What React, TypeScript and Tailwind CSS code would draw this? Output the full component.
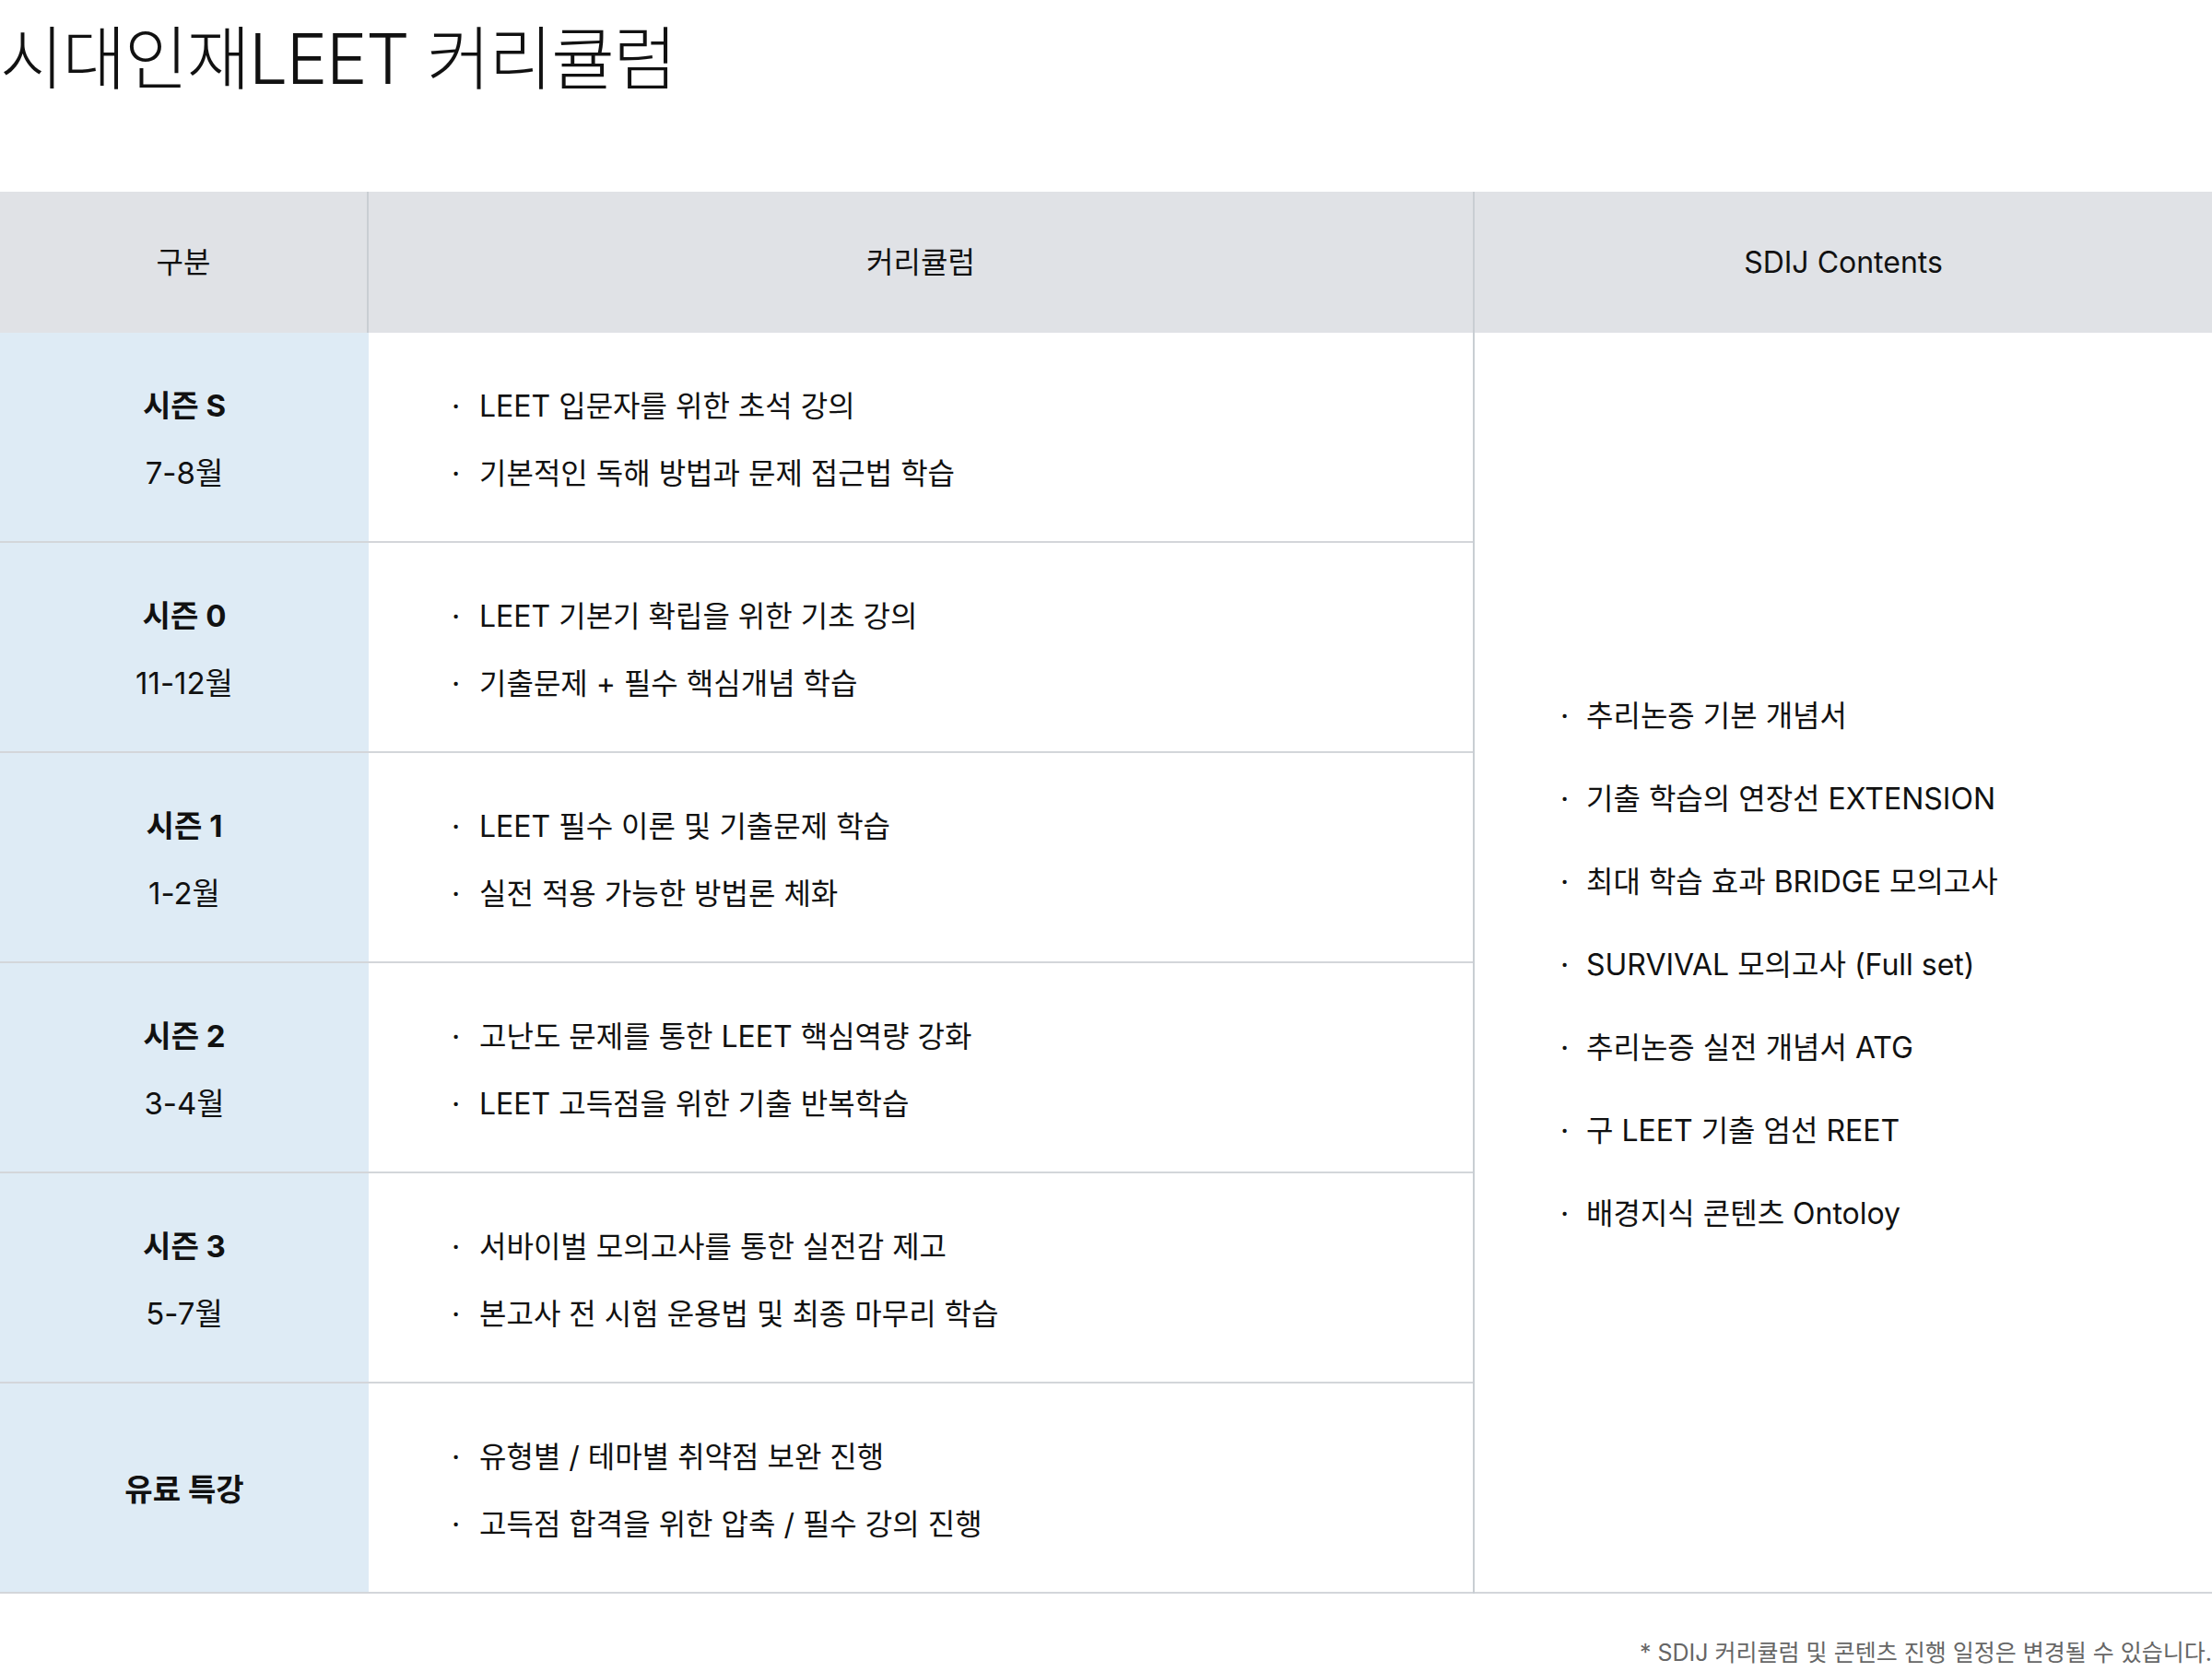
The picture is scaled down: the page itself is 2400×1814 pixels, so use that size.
const rows = [
  { season: "시즌 S", period: "7-8월", items: ["LEET 입문자를 위한 초석 강의", "기본적인 독해 방법과 문제 접근법 학습"] },
  { season: "시즌 0", period: "11-12월", items: ["LEET 기본기 확립을 위한 기초 강의", "기출문제 + 필수 핵심개념 학습"] },
  { season: "시즌 1", period: "1-2월", items: ["LEET 필수 이론 및 기출문제 학습", "실전 적용 가능한 방법론 체화"] },
  { season: "시즌 2", period: "3-4월", items: ["고난도 문제를 통한 LEET 핵심역량 강화", "LEET 고득점을 위한 기출 반복학습"] },
  { season: "시즌 3", period: "5-7월", items: ["서바이벌 모의고사를 통한 실전감 제고", "본고사 전 시험 운용법 및 최종 마무리 학습"] },
  { season: "유료 특강", period: "", items: ["유형별 / 테마별 취약점 보완 진행", "고득점 합격을 위한 압축 / 필수 강의 진행"] },
];

const contents = [
  "추리논증 기본 개념서",
  "기출 학습의 연장선 EXTENSION",
  "최대 학습 효과 BRIDGE 모의고사",
  "SURVIVAL 모의고사 (Full set)",
  "추리논증 실전 개념서 ATG",
  "구 LEET 기출 엄선 REET",
  "배경지식 콘텐츠 Ontoloy",
];

export default function App() {
  return (
    <div className="w-[2400px] bg-white text-[#111] font-[Inter,'Noto_Sans_CJK_KR',sans-serif]">
      <h1 className="pt-[26px] text-[75px] font-light leading-none tracking-[-0.02em]">시대인재LEET 커리큘럼</h1>

      <div className="mt-[107px] flex">
        {/* 구분 + 커리큘럼 */}
        <div className="w-[1598px] flex flex-col">
          <div className="h-[153px] flex bg-[#e0e2e6] text-[32px]">
            <div className="w-[400px] border-r-2 border-[#c9ced3] flex items-center justify-center">구분</div>
            <div className="flex-1 flex items-center justify-center">커리큘럼</div>
          </div>
          {rows.map((row) => (
            <div key={row.season} className="h-[228px] flex border-b-2 border-[#d3d6da]">
              <div className="w-[400px] bg-[#deebf5] flex flex-col items-center justify-center pt-[5px] text-[33px] leading-[73px]">
                <div className="font-bold">{row.season}</div>
                {row.period && <div>{row.period}</div>}
              </div>
              <div className="flex-1 flex flex-col justify-center pl-[90px] pt-[5px] text-[32px] leading-[73px]">
                {row.items.map((item) => (
                  <div key={item} className="flex">
                    <span className="w-[30px]">·</span>
                    <span>{item}</span>
                  </div>
                ))}
              </div>
            </div>
          ))}
        </div>

        {/* SDIJ Contents */}
        <div className="flex-1 flex flex-col border-l-2 border-[#c9ced3]">
          <div className="h-[153px] bg-[#e0e2e6] flex items-center justify-center text-[32px]">SDIJ Contents</div>
          <div className="flex-1 flex flex-col justify-center pl-[93px] pt-[6px] border-b-2 border-[#d3d6da] text-[32px] leading-[90px]">
            {contents.map((item) => (
              <div key={item} className="flex">
                <span className="w-[28px]">·</span>
                <span>{item}</span>
              </div>
            ))}
          </div>
        </div>
      </div>

      <p className="mt-[49px] pb-[5px] text-right text-[25px] leading-[30px] text-[#666]">
        * SDIJ 커리큘럼 및 콘텐츠 진행 일정은 변경될 수 있습니다.
      </p>
    </div>
  );
}
